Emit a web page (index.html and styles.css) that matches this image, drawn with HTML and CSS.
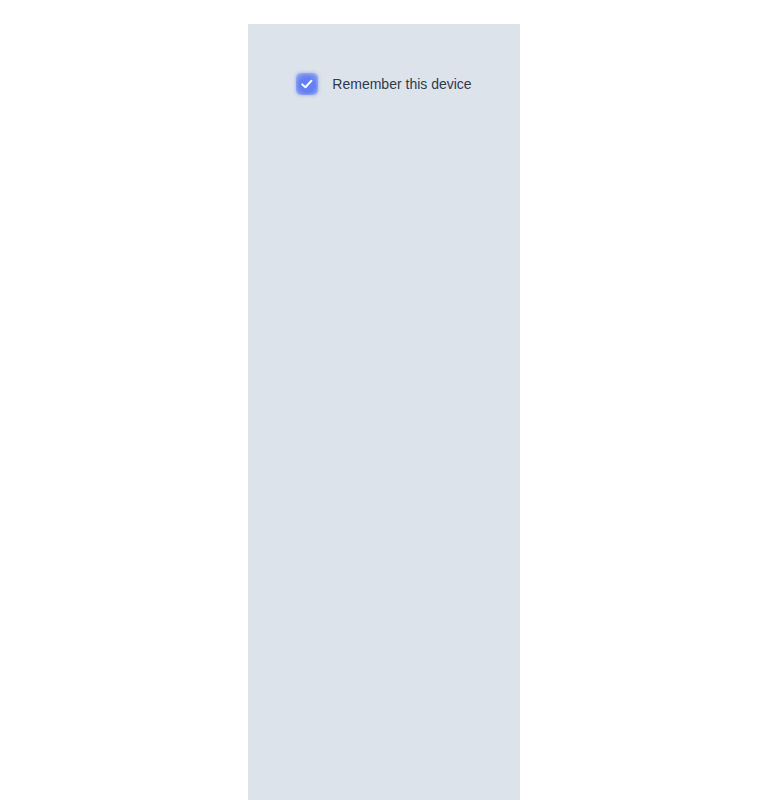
FILE: index.html
```html
<!DOCTYPE html>
<html>
<head>
<meta charset="utf-8">
<link rel="stylesheet" href="styles.css">
</head>
<body>
<div class="panel">
  <label class="row">
    <span class="box">
      <svg width="14" height="14" viewBox="0 0 14 14"><path d="M2.3 7.4 L5.4 10.2 L11.4 3.8" fill="none" stroke="#fff" stroke-width="2" stroke-linecap="round" stroke-linejoin="round"/></svg>
    </span>
    <span class="text">Remember this device</span>
  </label>
</div>
</body>
</html>
```
FILE: styles.css
```css
html, body { margin: 0; padding: 0; background: #fff; }
body { padding-top: 24px; font-family: "Liberation Sans", Arial, sans-serif; }
.panel {
  width: 272px;
  min-height: 776px;
  margin: 0 auto;
  background: #dde3eb;
  box-sizing: border-box;
  padding-top: 48px;
  display: flex;
  flex-direction: column;
  align-items: center;
}
.row {
  display: flex;
  align-items: center;
  gap: 14px;
  height: 24px;
}
.box {
  width: 22px;
  height: 22px;
  border-radius: 5px;
  background: radial-gradient(circle at 50% 55%, #5e7cff 0%, #6580f2 45%, #8da0ec 85%, #a8b4e8 100%);
  box-shadow: 0 0 3px 1px rgba(140,158,230,0.5), inset 0 0 3px rgba(200,210,250,0.6);
  display: flex;
  align-items: center;
  justify-content: center;
}
.text {
  font-size: 14px;
  color: #2f3a4f;
}
```
